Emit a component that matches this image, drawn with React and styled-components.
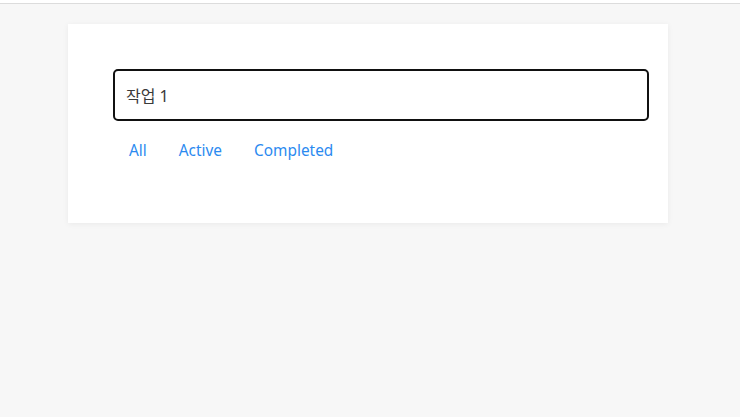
import React, { useState } from "react";
import styled, { createGlobalStyle } from "styled-components";

const Global = createGlobalStyle`
  html, body { margin: 0; padding: 0; }
  body {
    background: #f7f7f7;
    font-family: "Noto Sans", "Noto Sans CJK KR", sans-serif;
    height: 417px;
    overflow: hidden;
  }
`;

const TopBar = styled.div`
  height: 3px;
  background: #ffffff;
  border-bottom: 1px solid #dcdcdc;
`;

const Page = styled.main`
  display: flex;
  flex-direction: column;
  padding: 20px 0 0 68px;
`;

const Card = styled.section`
  width: 600px;
  box-sizing: border-box;
  background: #fff;
  padding: 45px 19px 0 45px;
  height: 199px;
  box-shadow: 0 1px 6px rgba(0, 0, 0, 0.06);
  display: flex;
  flex-direction: column;
`;

const Input = styled.input`
  box-sizing: border-box;
  width: 536px;
  height: 52px;
  border: 2px solid #111;
  border-radius: 5px;
  padding: 0 11px;
  font-family: "Noto Sans", "Noto Sans CJK KR", sans-serif;
  font-size: 16px;
  color: #3a3a3a;
  outline: none;
  caret-color: #222;
`;

const Filters = styled.nav`
  display: flex;
  margin-top: 17px;
`;

const Filter = styled.button`
  background: none;
  border: none;
  padding: 0 16px;
  height: 24px;
  font-family: "Noto Sans", "Noto Sans CJK KR", sans-serif;
  font-size: 15.4px;
  color: #2b8af0;
  cursor: pointer;
`;

export default function App() {
  const [value, setValue] = useState("작업 1");
  return (
    <>
      <Global />
      <TopBar />
      <Page>
        <Card>
          <Input
            autoFocus
            value={value}
            onChange={(e) => setValue(e.target.value)}
          />
          <Filters>
            <Filter>All</Filter>
            <Filter>Active</Filter>
            <Filter>Completed</Filter>
          </Filters>
        </Card>
      </Page>
    </>
  );
}
